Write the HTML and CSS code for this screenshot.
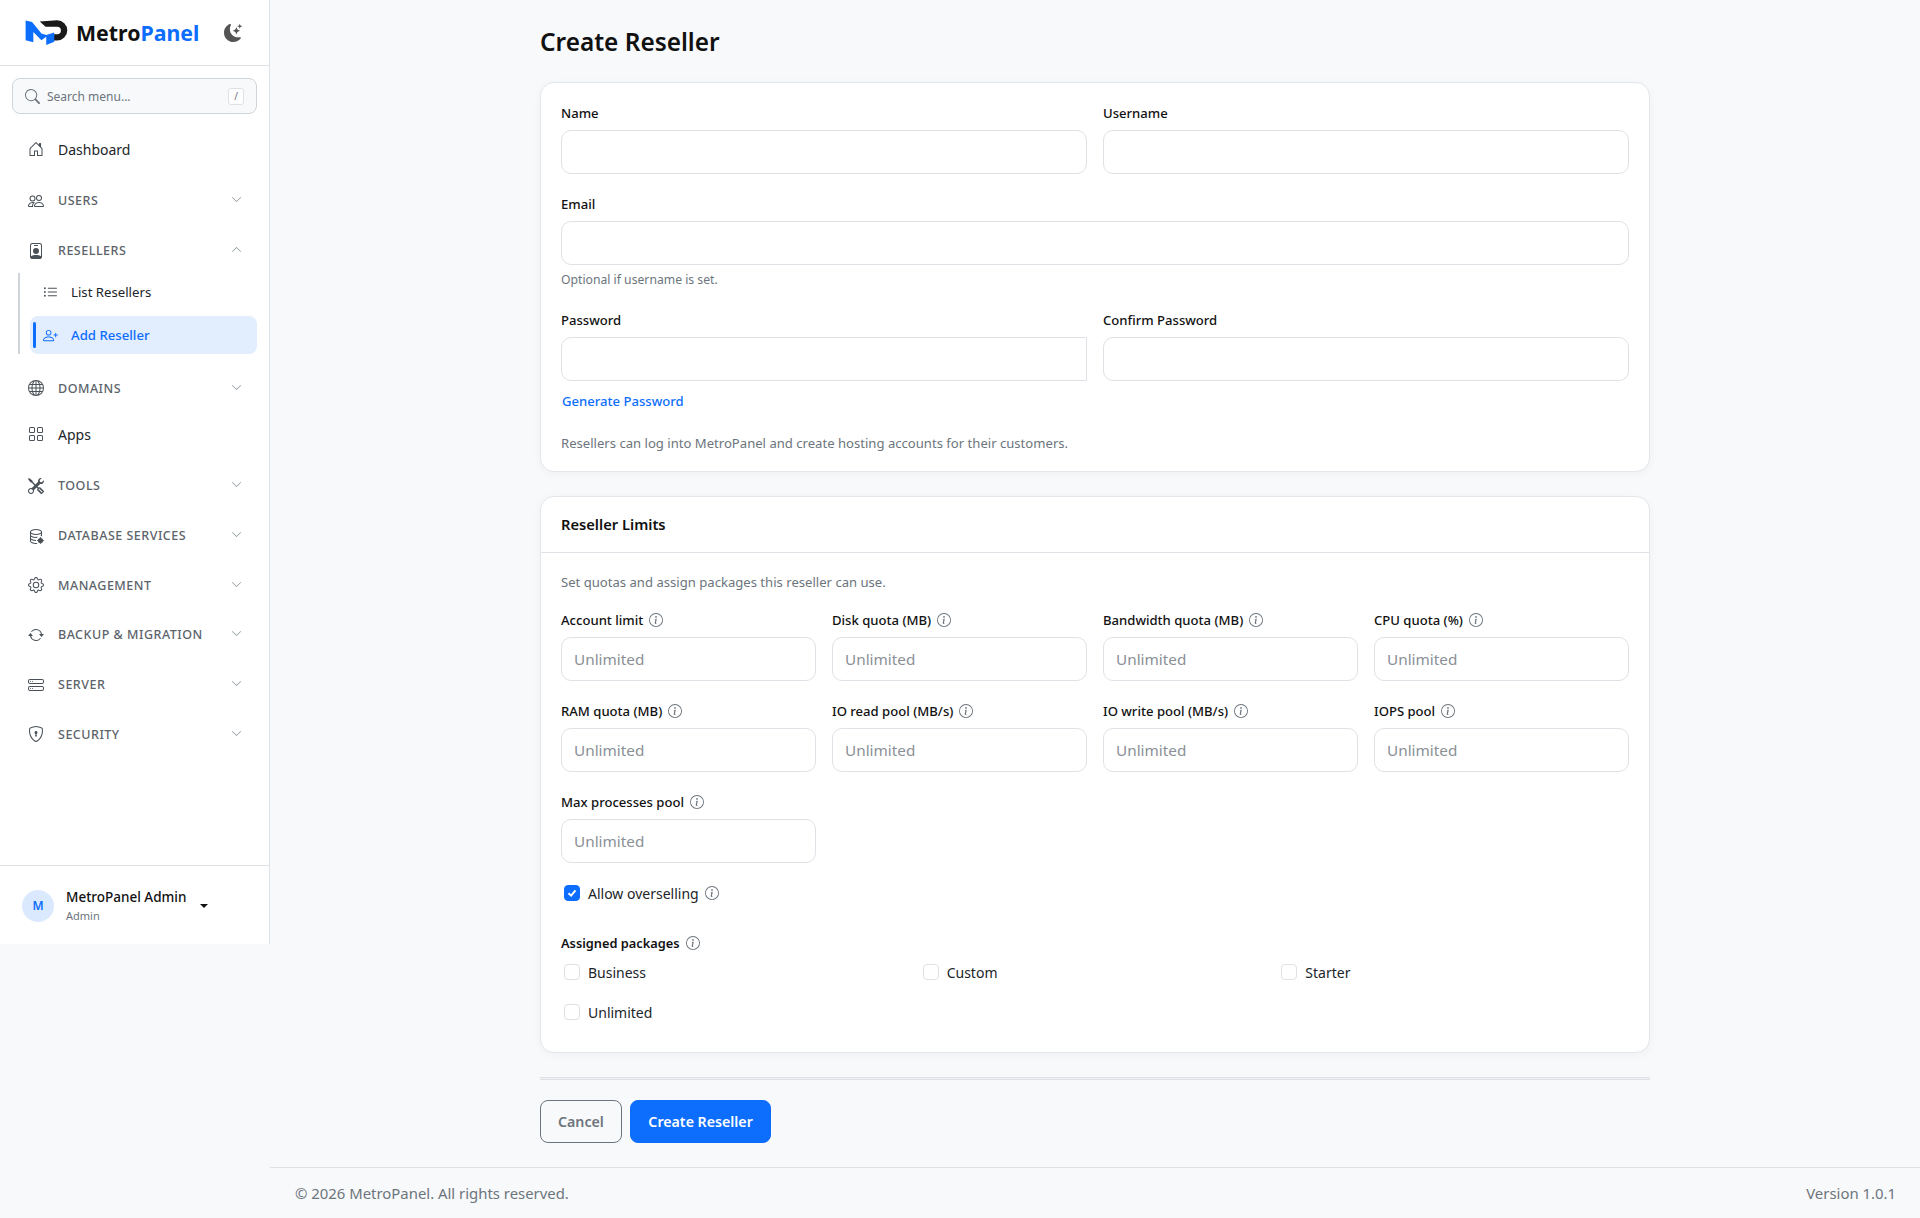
FILE: index.html
```html
<!DOCTYPE html>
<html lang="en">

<head>
  <meta charset="UTF-8" />
  <meta name="viewport" content="width=device-width, initial-scale=1.0" />
  <title>Create Reseller - MetroPanel</title>
  <link rel="stylesheet" href="styles.css">
</head>

<body>
  <svg class="sprite" xmlns="http://www.w3.org/2000/svg">
    <symbol id="i-house" viewBox="0 0 16 16"><path d="M8.354 1.146a.5.5 0 0 0-.708 0l-6 6A.5.5 0 0 0 1.5 7.5v7a.5.5 0 0 0 .5.5h4.5a.5.5 0 0 0 .5-.5v-4h2v4a.5.5 0 0 0 .5.5H14a.5.5 0 0 0 .5-.5v-7a.5.5 0 0 0-.146-.354L13 5.793V2.5a.5.5 0 0 0-.5-.5h-1a.5.5 0 0 0-.5.5v1.293L8.354 1.146zM2.5 14V7.707l5.5-5.5 5.5 5.5V14H10v-4a.5.5 0 0 0-.5-.5h-3a.5.5 0 0 0-.5.5v4H2.5z"/></symbol>
    <symbol id="i-people" viewBox="0 0 16 16"><path d="M15 14s1 0 1-1-1-4-5-4-5 3-5 4 1 1 1 1h8Zm-7.978-1A.261.261 0 0 1 7 12.996c.001-.264.167-1.03.76-1.72C8.312 10.629 9.282 10 11 10c1.717 0 2.687.63 3.24 1.276.593.69.758 1.457.76 1.72l-.008.002a.274.274 0 0 1-.014.002H7.022ZM11 7a2 2 0 1 0 0-4 2 2 0 0 0 0 4Zm3-2a3 3 0 1 1-6 0 3 3 0 0 1 6 0ZM6.936 9.28a5.88 5.88 0 0 0-1.23-.247A7.35 7.35 0 0 0 5 9c-4 0-5 3-5 4 0 .667.333 1 1 1h4.216A2.238 2.238 0 0 1 5 13c0-1.01.377-2.042 1.09-2.904.243-.294.526-.569.846-.816ZM4.92 10A5.493 5.493 0 0 0 4 13H1c0-.26.164-1.03.76-1.724.545-.636 1.492-1.256 3.16-1.275ZM1.5 5.5a3 3 0 1 1 6 0 3 3 0 0 1-6 0Zm3-2a2 2 0 1 0 0 4 2 2 0 0 0 0-4Z"/></symbol>
    <symbol id="i-badge" viewBox="0 0 16 16"><path d="M6.5 2a.5.5 0 0 0 0 1h3a.5.5 0 0 0 0-1h-3zM11 8a3 3 0 1 1-6 0 3 3 0 0 1 6 0z"/><path d="M4.5 0A2.5 2.5 0 0 0 2 2.5V14a2 2 0 0 0 2 2h8a2 2 0 0 0 2-2V2.5A2.5 2.5 0 0 0 11.5 0h-7zM3 2.5A1.5 1.5 0 0 1 4.5 1h7A1.5 1.5 0 0 1 13 2.5v10.795a4.2 4.2 0 0 0-.776-.492C11.392 12.387 10.063 12 8 12s-3.392.387-4.224.803a4.2 4.2 0 0 0-.776.492V2.5z"/></symbol>
    <symbol id="i-list" viewBox="0 0 16 16"><path d="M5 11.5a.5.5 0 0 1 .5-.5h9a.5.5 0 0 1 0 1h-9a.5.5 0 0 1-.5-.5zm0-4a.5.5 0 0 1 .5-.5h9a.5.5 0 0 1 0 1h-9a.5.5 0 0 1-.5-.5zm0-4a.5.5 0 0 1 .5-.5h9a.5.5 0 0 1 0 1h-9a.5.5 0 0 1-.5-.5zm-3 1a1 1 0 1 0 0-2 1 1 0 0 0 0 2zm0 4a1 1 0 1 0 0-2 1 1 0 0 0 0 2zm0 4a1 1 0 1 0 0-2 1 1 0 0 0 0 2z"/></symbol>
    <symbol id="i-person-plus" viewBox="0 0 16 16"><path d="M6 8a3 3 0 1 0 0-6 3 3 0 0 0 0 6zm2-3a2 2 0 1 1-4 0 2 2 0 0 1 4 0zm4 8c0 1-1 1-1 1H1s-1 0-1-1 1-4 6-4 6 3 6 4zm-1-.004c-.001-.246-.154-.986-.832-1.664C9.516 10.68 8.289 10 6 10c-2.29 0-3.516.68-4.168 1.332-.678.678-.83 1.418-.832 1.664h10z"/><path d="M13.5 5a.5.5 0 0 1 .5.5V7h1.5a.5.5 0 0 1 0 1H14v1.5a.5.5 0 0 1-1 0V8h-1.5a.5.5 0 0 1 0-1H13V5.5a.5.5 0 0 1 .5-.5z"/></symbol>
    <symbol id="i-globe" viewBox="0 0 16 16"><path d="M0 8a8 8 0 1 1 16 0A8 8 0 0 1 0 8zm7.5-6.923c-.67.204-1.335.82-1.887 1.855A7.97 7.97 0 0 0 5.145 4H7.5V1.077zM4.09 4a9.267 9.267 0 0 1 .64-1.539 6.7 6.7 0 0 1 .597-.933A7.025 7.025 0 0 0 2.255 4H4.09zm-.582 3.5c.03-.877.138-1.718.312-2.5H1.674a6.958 6.958 0 0 0-.656 2.5h2.49zM4.847 5a12.5 12.5 0 0 0-.338 2.5H7.5V5H4.847zM8.5 5v2.5h2.99a12.495 12.495 0 0 0-.337-2.5H8.5zM4.51 8.5a12.5 12.5 0 0 0 .337 2.5H7.5V8.5H4.51zm3.99 0V11h2.653c.187-.765.306-1.608.338-2.5H8.5zM5.145 12c.138.386.295.744.468 1.068.552 1.035 1.218 1.65 1.887 1.855V12H5.145zm.182 2.472a6.696 6.696 0 0 1-.597-.933A9.268 9.268 0 0 1 4.09 12H2.255a7.024 7.024 0 0 0 3.072 2.472zM3.82 11a13.652 13.652 0 0 1-.312-2.5h-2.49c.062.89.291 1.733.656 2.5H3.82zm6.853 3.472A7.024 7.024 0 0 0 13.745 12H11.91a9.27 9.27 0 0 1-.64 1.539 6.688 6.688 0 0 1-.597.933zM8.5 12v2.923c.67-.204 1.335-.82 1.887-1.855.173-.324.33-.682.468-1.068H8.5zm3.68-1h2.146c.365-.767.594-1.61.656-2.5h-2.49a13.65 13.65 0 0 1-.312 2.5zm2.802-3.5a6.959 6.959 0 0 0-.656-2.5H12.18c.174.782.282 1.623.312 2.5h2.49zM11.27 2.461c.247.464.462.98.64 1.539h1.835a7.024 7.024 0 0 0-3.072-2.472c.218.284.418.598.597.933zM10.855 4a7.966 7.966 0 0 0-.468-1.068C9.835 1.897 9.17 1.282 8.5 1.077V4h2.355z"/></symbol>
    <symbol id="i-grid" viewBox="0 0 16 16"><path d="M1 2.5A1.5 1.5 0 0 1 2.5 1h3A1.5 1.5 0 0 1 7 2.5v3A1.5 1.5 0 0 1 5.5 7h-3A1.5 1.5 0 0 1 1 5.5v-3zM2.5 2a.5.5 0 0 0-.5.5v3a.5.5 0 0 0 .5.5h3a.5.5 0 0 0 .5-.5v-3a.5.5 0 0 0-.5-.5h-3zm6.5.5A1.5 1.5 0 0 1 10.5 1h3A1.5 1.5 0 0 1 15 2.5v3A1.5 1.5 0 0 1 13.5 7h-3A1.5 1.5 0 0 1 9 5.5v-3zm1.5-.5a.5.5 0 0 0-.5.5v3a.5.5 0 0 0 .5.5h3a.5.5 0 0 0 .5-.5v-3a.5.5 0 0 0-.5-.5h-3zM1 10.5A1.5 1.5 0 0 1 2.5 9h3A1.5 1.5 0 0 1 7 10.5v3A1.5 1.5 0 0 1 5.5 15h-3A1.5 1.5 0 0 1 1 13.5v-3zm1.5-.5a.5.5 0 0 0-.5.5v3a.5.5 0 0 0 .5.5h3a.5.5 0 0 0 .5-.5v-3a.5.5 0 0 0-.5-.5h-3zm6.5.5A1.5 1.5 0 0 1 10.5 9h3a1.5 1.5 0 0 1 1.5 1.5v3a1.5 1.5 0 0 1-1.5 1.5h-3A1.5 1.5 0 0 1 9 13.5v-3zm1.5-.5a.5.5 0 0 0-.5.5v3a.5.5 0 0 0 .5.5h3a.5.5 0 0 0 .5-.5v-3a.5.5 0 0 0-.5-.5h-3z"/></symbol>
    <symbol id="i-tools" viewBox="0 0 16 16"><path d="M1 0 0 1l2.2 3.081a1 1 0 0 0 .815.419h.07a1 1 0 0 1 .708.293l2.675 2.675-2.617 2.654A3.003 3.003 0 0 0 0 13a3 3 0 1 0 5.878-.851l2.654-2.617.968.968-.305.914a1 1 0 0 0 .242 1.023l3.27 3.27a.997.997 0 0 0 1.414 0l1.586-1.586a.997.997 0 0 0 0-1.414l-3.27-3.27a1 1 0 0 0-1.023-.242L10.5 9.5l-.96-.96 2.68-2.643A3.005 3.005 0 0 0 16 3c0-.269-.035-.53-.102-.777l-2.14 2.141L12 4l-.364-1.757L13.777.102a3 3 0 0 0-3.675 3.68L7.462 6.46 4.793 3.793a1 1 0 0 1-.293-.707v-.071a1 1 0 0 0-.419-.814L1 0Zm9.646 10.646a.5.5 0 0 1 .708 0l2.914 2.915a.5.5 0 0 1-.707.707l-2.915-2.914a.5.5 0 0 1 0-.708ZM3 11l.471.242.529.026.287.445.445.287.026.529L5 13l-.242.471-.026.529-.445.287-.287.445-.529.026L3 15l-.471-.242L2 14.732l-.287-.445L1.268 14l-.026-.529L1 13l.242-.471.026-.529.445-.287.287-.445.529-.026L3 11Z"/></symbol>
    <symbol id="i-database" viewBox="0 0 16 16"><path d="M12.096 6.223A4.92 4.92 0 0 0 13 5.698V7c0 .289-.213.654-.753 1.007a4.493 4.493 0 0 1 1.753.25V4c0-1.007-.875-1.755-1.904-2.223C11.022 1.289 9.573 1 8 1s-3.022.289-4.096.777C2.875 2.245 2 2.993 2 4v9c0 1.007.875 1.755 1.904 2.223C4.978 15.71 6.427 16 8 16c.536 0 1.058-.034 1.555-.097a4.525 4.525 0 0 1-.813-.927C8.5 14.992 8.252 15 8 15c-1.464 0-2.766-.27-3.682-.687C3.356 13.875 3 13.373 3 13v-1.302c.271.202.58.378.904.525C4.978 12.71 6.427 13 8 13h.027a4.552 4.552 0 0 1 0-1H8c-1.464 0-2.766-.27-3.682-.687C3.356 10.875 3 10.373 3 10V8.698c.271.202.58.378.904.525C4.978 9.71 6.427 10 8 10c.262 0 .52-.008.774-.024a4.525 4.525 0 0 1 1.102-1.132C9.298 8.944 8.666 9 8 9c-1.464 0-2.766-.27-3.682-.687C3.356 7.875 3 7.373 3 7V5.698c.271.202.58.378.904.525C4.978 6.711 6.427 7 8 7s3.022-.289 4.096-.777ZM3 4c0-.374.356-.875 1.318-1.313C5.234 2.271 6.536 2 8 2s2.766.27 3.682.687C12.644 3.125 13 3.627 13 4c0 .374-.356.875-1.318 1.313C10.766 5.729 9.464 6 8 6s-2.766-.27-3.682-.687C3.356 4.875 3 4.373 3 4Z"/><circle cx="12.5" cy="12.5" r="2.6"/><path d="M11.9 9.2h1.2v6.6h-1.2zM9.2 11.9h6.6v1.2H9.2z"/></symbol>
    <symbol id="i-gear" viewBox="0 0 16 16"><path d="M8 4.754a3.246 3.246 0 1 0 0 6.492 3.246 3.246 0 0 0 0-6.492zM5.754 8a2.246 2.246 0 1 1 4.492 0 2.246 2.246 0 0 1-4.492 0z"/><path d="M9.796 1.343c-.527-1.79-3.065-1.79-3.592 0l-.094.319a.873.873 0 0 1-1.255.52l-.292-.16c-1.64-.892-3.433.902-2.54 2.541l.159.292a.873.873 0 0 1-.52 1.255l-.319.094c-1.79.527-1.79 3.065 0 3.592l.319.094a.873.873 0 0 1 .52 1.255l-.16.292c-.892 1.64.901 3.434 2.541 2.54l.292-.159a.873.873 0 0 1 1.255.52l.094.319c.527 1.79 3.065 1.79 3.592 0l.094-.319a.873.873 0 0 1 1.255-.52l.292.16c1.64.893 3.434-.902 2.54-2.541l-.159-.292a.873.873 0 0 1 .52-1.255l.319-.094c1.79-.527 1.79-3.065 0-3.592l-.319-.094a.873.873 0 0 1-.52-1.255l.16-.292c.893-1.64-.902-3.433-2.541-2.54l-.292.159a.873.873 0 0 1-1.255-.52l-.094-.319zm-2.633.283c.246-.835 1.428-.835 1.674 0l.094.319a1.873 1.873 0 0 0 2.693 1.115l.291-.16c.764-.415 1.6.42 1.184 1.185l-.159.292a1.873 1.873 0 0 0 1.116 2.692l.318.094c.835.246.835 1.428 0 1.674l-.319.094a1.873 1.873 0 0 0-1.115 2.693l.16.291c.415.764-.42 1.6-1.185 1.184l-.291-.159a1.873 1.873 0 0 0-2.693 1.116l-.094.318c-.246.835-1.428.835-1.674 0l-.094-.319a1.873 1.873 0 0 0-2.692-1.115l-.292.16c-.764.415-1.6-.42-1.184-1.185l.159-.291A1.873 1.873 0 0 0 1.945 8.93l-.319-.094c-.835-.246-.835-1.428 0-1.674l.319-.094A1.873 1.873 0 0 0 3.06 4.377l-.16-.292c-.415-.764.42-1.6 1.185-1.184l.292.159a1.873 1.873 0 0 0 2.692-1.115l.094-.319z"/></symbol>
    <symbol id="i-repeat" viewBox="0 0 16 16"><path d="M11.534 7h3.932a.25.25 0 0 1 .192.41l-1.966 2.36a.25.25 0 0 1-.384 0l-1.966-2.36a.25.25 0 0 1 .192-.41zm-11 2h3.932a.25.25 0 0 0 .192-.41L2.692 6.23a.25.25 0 0 0-.384 0L.342 8.59A.25.25 0 0 0 .534 9z"/><path d="M8 3c-1.552 0-2.94.707-3.857 1.818a.5.5 0 1 1-.771-.636A6.002 6.002 0 0 1 13.917 7H12.9A5.002 5.002 0 0 0 8 3zM3.1 9a5.002 5.002 0 0 0 8.757 2.182.5.5 0 1 1 .771.636A6.002 6.002 0 0 1 2.083 9H3.1z"/></symbol>
    <symbol id="i-hdd" viewBox="0 0 16 16"><path d="M14 10a1 1 0 0 1 1 1v1a1 1 0 0 1-1 1H2a1 1 0 0 1-1-1v-1a1 1 0 0 1 1-1h12zM2 9a2 2 0 0 0-2 2v1a2 2 0 0 0 2 2h12a2 2 0 0 0 2-2v-1a2 2 0 0 0-2-2H2z"/><path d="M5 11.5a.5.5 0 1 1-1 0 .5.5 0 0 1 1 0zm-2 0a.5.5 0 1 1-1 0 .5.5 0 0 1 1 0zM14 3a1 1 0 0 1 1 1v1a1 1 0 0 1-1 1H2a1 1 0 0 1-1-1V4a1 1 0 0 1 1-1h12zM2 2a2 2 0 0 0-2 2v1a2 2 0 0 0 2 2h12a2 2 0 0 0 2-2V4a2 2 0 0 0-2-2H2z"/><path d="M5 4.5a.5.5 0 1 1-1 0 .5.5 0 0 1 1 0zm-2 0a.5.5 0 1 1-1 0 .5.5 0 0 1 1 0z"/></symbol>
    <symbol id="i-shield" viewBox="0 0 16 16"><path d="M5.338 1.59a61.44 61.44 0 0 0-2.837.856.481.481 0 0 0-.328.39c-.554 4.157.726 7.19 2.253 9.188a10.725 10.725 0 0 0 2.287 2.233c.346.244.652.42.893.533.12.057.218.095.293.118a.55.55 0 0 0 .101.025.615.615 0 0 0 .1-.025c.076-.023.174-.061.294-.118.24-.113.547-.29.893-.533a10.726 10.726 0 0 0 2.287-2.233c1.527-1.997 2.807-5.031 2.253-9.188a.48.48 0 0 0-.328-.39c-.651-.213-1.75-.56-2.837-.855C9.552 1.29 8.531 1.067 8 1.067c-.53 0-1.552.223-2.662.524zM5.072.56C6.157.265 7.31 0 8 0s1.843.265 2.928.56c1.11.3 2.229.655 2.887.87a1.54 1.54 0 0 1 1.044 1.262c.596 4.477-.787 7.795-2.465 9.99a11.775 11.775 0 0 1-2.517 2.453 7.159 7.159 0 0 1-1.048.625c-.28.132-.581.24-.829.24s-.548-.108-.829-.24a7.158 7.158 0 0 1-1.048-.625 11.777 11.777 0 0 1-2.517-2.453C1.928 10.487.545 7.169 1.141 2.692A1.54 1.54 0 0 1 2.185 1.43 62.456 62.456 0 0 1 5.072.56z"/><path d="M9.5 6.5a1.5 1.5 0 0 1-1 1.415l.385 1.99a.5.5 0 0 1-.491.595h-.788a.5.5 0 0 1-.49-.595l.384-1.99a1.5 1.5 0 1 1 2-1.415z"/></symbol>
    <symbol id="i-info" viewBox="0 0 16 16"><path d="M8 15A7 7 0 1 1 8 1a7 7 0 0 1 0 14zm0 1A8 8 0 1 0 8 0a8 8 0 0 0 0 16z"/><path d="m8.93 6.588-2.29.287-.082.38.45.083c.294.07.352.176.288.469l-.738 3.468c-.194.897.105 1.319.808 1.319.545 0 1.178-.252 1.465-.598l.088-.416c-.2.176-.492.246-.686.246-.275 0-.375-.193-.304-.533L8.93 6.588zM9 4.5a1 1 0 1 1-2 0 1 1 0 0 1 2 0z"/></symbol>
    <symbol id="i-moon" viewBox="0 0 16 16"><path d="M6 .278a.768.768 0 0 1 .08.858 7.208 7.208 0 0 0-.878 3.46c0 4.021 3.278 7.277 7.318 7.277.527 0 1.04-.055 1.533-.16a.787.787 0 0 1 .81.316.733.733 0 0 1-.031.893A8.349 8.349 0 0 1 8.344 16C3.734 16 0 12.286 0 7.71 0 4.266 2.114 1.312 5.124.06A.752.752 0 0 1 6 .278z"/><path d="M10.794 3.148a.217.217 0 0 1 .412 0l.387 1.162c.173.518.579.924 1.097 1.097l1.162.387a.217.217 0 0 1 0 .412l-1.162.387a1.734 1.734 0 0 0-1.097 1.097l-.387 1.162a.217.217 0 0 1-.412 0l-.387-1.162A1.734 1.734 0 0 0 9.31 6.593l-1.162-.387a.217.217 0 0 1 0-.412l1.162-.387a1.734 1.734 0 0 0 1.097-1.097l.387-1.162zM13.863.099a.145.145 0 0 1 .274 0l.258.774c.115.346.386.617.732.732l.774.258a.145.145 0 0 1 0 .274l-.774.258a1.156 1.156 0 0 0-.732.732l-.258.774a.145.145 0 0 1-.274 0l-.258-.774a1.156 1.156 0 0 0-.732-.732l-.774-.258a.145.145 0 0 1 0-.274l.774-.258c.346-.115.617-.386.732-.732L13.863.1z"/></symbol>
    <symbol id="i-search" viewBox="0 0 16 16"><path d="M11.742 10.344a6.5 6.5 0 1 0-1.397 1.398h-.001c.03.04.062.078.098.115l3.85 3.85a1 1 0 0 0 1.415-1.414l-3.85-3.85a1.007 1.007 0 0 0-.115-.1zM12 6.5a5.5 5.5 0 1 1-11 0 5.5 5.5 0 0 1 11 0z"/></symbol>
    <symbol id="i-down" viewBox="0 0 16 16"><path d="M1.646 4.646a.5.5 0 0 1 .708 0L8 10.293l5.646-5.647a.5.5 0 0 1 .708.708l-6 6a.5.5 0 0 1-.708 0l-6-6a.5.5 0 0 1 0-.708z"/></symbol>
    <symbol id="i-up" viewBox="0 0 16 16"><path d="M7.646 4.646a.5.5 0 0 1 .708 0l6 6a.5.5 0 0 1-.708.708L8 5.707l-5.646 5.647a.5.5 0 0 1-.708-.708l6-6z"/></symbol>
  </svg>

  <div class="layout">
    <aside class="sidebar">
      <div class="brand">
        <svg class="brand-logo" viewBox="0 0 46 28">
          <path class="logo-dark" d="M15 2.700 L33 1.300 A10.500 10.500 0 0 1 33 22.300 H28 V15.800 H33 A3.900 3.900 0 0 0 33 8 H21 Z" />
          <path class="logo-blue" d="M0.300 1.500 L7 3 L16.700 15 L21.700 16.500 L30 14 V23.700 L21.700 27 V18.500 L16.700 22 L8.300 13.500 V24 L0.300 22 Z" />
        </svg>
        <span class="brand-name">Metro<span class="brand-accent">Panel</span></span>
        <svg class="icon moon"><use href="#i-moon" /></svg>
      </div>

      <div class="search-box">
        <svg class="icon search-icon"><use href="#i-search" /></svg>
        <span class="search-text">Search menu...</span>
        <kbd class="search-key">/</kbd>
      </div>

      <nav class="nav">
        <a class="nav-link"><svg class="icon"><use href="#i-house" /></svg>Dashboard</a>
        <a class="nav-group"><svg class="icon"><use href="#i-people" /></svg>USERS<svg class="icon chev"><use href="#i-down" /></svg></a>
        <a class="nav-group"><svg class="icon"><use href="#i-badge" /></svg>RESELLERS<svg class="icon chev"><use href="#i-up" /></svg></a>
        <div class="sub-nav">
          <a class="sub-link"><svg class="icon"><use href="#i-list" /></svg>List Resellers</a>
          <a class="sub-link active"><svg class="icon"><use href="#i-person-plus" /></svg>Add Reseller</a>
        </div>
        <a class="nav-group"><svg class="icon"><use href="#i-globe" /></svg>DOMAINS<svg class="icon chev"><use href="#i-down" /></svg></a>
        <a class="nav-link"><svg class="icon"><use href="#i-grid" /></svg>Apps</a>
        <a class="nav-group"><svg class="icon"><use href="#i-tools" /></svg>TOOLS<svg class="icon chev"><use href="#i-down" /></svg></a>
        <a class="nav-group"><svg class="icon"><use href="#i-database" /></svg>DATABASE SERVICES<svg class="icon chev"><use href="#i-down" /></svg></a>
        <a class="nav-group"><svg class="icon"><use href="#i-gear" /></svg>MANAGEMENT<svg class="icon chev"><use href="#i-down" /></svg></a>
        <a class="nav-group"><svg class="icon"><use href="#i-repeat" /></svg>BACKUP &amp; MIGRATION<svg class="icon chev"><use href="#i-down" /></svg></a>
        <a class="nav-group"><svg class="icon"><use href="#i-hdd" /></svg>SERVER<svg class="icon chev"><use href="#i-down" /></svg></a>
        <a class="nav-group"><svg class="icon"><use href="#i-shield" /></svg>SECURITY<svg class="icon chev"><use href="#i-down" /></svg></a>
      </nav>

      <div class="user-box">
        <div class="avatar">M</div>
        <div class="user-info">
          <div class="user-name">MetroPanel Admin</div>
          <div class="user-role">Admin</div>
        </div>
        <span class="caret"></span>
      </div>
    </aside>

    <div class="main">
      <main class="content">
        <h1 class="page-title">Create Reseller</h1>

        <section class="card card-basic">
          <div class="row-2">
            <div class="field">
              <label class="label">Name</label>
              <input class="input" type="text">
            </div>
            <div class="field">
              <label class="label">Username</label>
              <input class="input" type="text">
            </div>
          </div>
          <div class="field field-email">
            <label class="label">Email</label>
            <input class="input" type="text">
            <div class="hint">Optional if username is set.</div>
          </div>
          <div class="row-2">
            <div class="field">
              <label class="label">Password</label>
              <input class="input input-square" type="password">
              <a class="generate">Generate Password</a>
            </div>
            <div class="field">
              <label class="label">Confirm Password</label>
              <input class="input" type="password">
            </div>
          </div>
          <p class="help note">Resellers can log into MetroPanel and create hosting accounts for their customers.</p>
        </section>

        <section class="card">
          <h2 class="card-header">Reseller Limits</h2>
          <div class="card-body">
            <p class="help intro">Set quotas and assign packages this reseller can use.</p>
            <div class="row-4">
              <div class="field"><label class="label">Account limit<svg class="icon info"><use href="#i-info" /></svg></label><input class="input" placeholder="Unlimited"></div>
              <div class="field"><label class="label">Disk quota (MB)<svg class="icon info"><use href="#i-info" /></svg></label><input class="input" placeholder="Unlimited"></div>
              <div class="field"><label class="label">Bandwidth quota (MB)<svg class="icon info"><use href="#i-info" /></svg></label><input class="input" placeholder="Unlimited"></div>
              <div class="field"><label class="label">CPU quota (%)<svg class="icon info"><use href="#i-info" /></svg></label><input class="input" placeholder="Unlimited"></div>
              <div class="field"><label class="label">RAM quota (MB)<svg class="icon info"><use href="#i-info" /></svg></label><input class="input" placeholder="Unlimited"></div>
              <div class="field"><label class="label">IO read pool (MB/s)<svg class="icon info"><use href="#i-info" /></svg></label><input class="input" placeholder="Unlimited"></div>
              <div class="field"><label class="label">IO write pool (MB/s)<svg class="icon info"><use href="#i-info" /></svg></label><input class="input" placeholder="Unlimited"></div>
              <div class="field"><label class="label">IOPS pool<svg class="icon info"><use href="#i-info" /></svg></label><input class="input" placeholder="Unlimited"></div>
              <div class="field"><label class="label">Max processes pool<svg class="icon info"><use href="#i-info" /></svg></label><input class="input" placeholder="Unlimited"></div>
            </div>

            <label class="check oversell">
              <span class="box checked"><svg viewBox="0 0 16 16"><path d="M4 8.300 L7 11 L12 5" /></svg></span>
              Allow overselling<svg class="icon info"><use href="#i-info" /></svg>
            </label>

            <div class="packages-title">Assigned packages<svg class="icon info"><use href="#i-info" /></svg></div>
            <div class="packages">
              <label class="check"><span class="box"></span>Business</label>
              <label class="check"><span class="box"></span>Custom</label>
              <label class="check"><span class="box"></span>Starter</label>
              <label class="check"><span class="box"></span>Unlimited</label>
            </div>
          </div>
        </section>

        <hr class="divider">

        <div class="actions">
          <button class="btn btn-outline">Cancel</button>
          <button class="btn btn-primary">Create Reseller</button>
        </div>
      </main>

      <footer class="footer">
        <span>© 2026 MetroPanel. All rights reserved.</span>
        <span>Version 1.0.1</span>
      </footer>
    </div>
  </div>
</body>

</html>
```

FILE: styles.css
```css
* {
  margin: 0;
  padding: 0;
  box-sizing: border-box;
}

body {
  background: #f8f9fa;
  color: #212529;
  font-family: 'Noto Sans', 'Open Sans', sans-serif;
  font-size: 15px;
}

.sprite {
  display: none;
}

.icon {
  width: 16px;
  height: 16px;
  fill: currentColor;
  flex-shrink: 0;
}

.layout {
  display: flex;
  min-height: 1218px;
  align-items: flex-start;
}

/* Sidebar */
.sidebar {
  width: 270px;
  height: 944px;
  flex-shrink: 0;
  background: #fff;
  border-right: 1px solid #dee2e6;
  display: flex;
  flex-direction: column;
}

.brand {
  height: 66px;
  padding: 0 25px;
  display: flex;
  align-items: center;
  border-bottom: 1px solid #dee2e6;
}

.brand-logo {
  width: 45px;
  height: 27px;
  margin-top: -1px;
}

.logo-blue {
  fill: #0d6efd;
}

.logo-dark {
  fill: #1a1a1a;
}

.brand-name {
  margin-left: 6px;
  font-size: 21.3px;
  font-weight: 700;
  color: #111;
}

.brand-accent {
  color: #0d6efd;
}

.moon {
  width: 18px;
  height: 18px;
  margin-left: 25px;
  color: #555;
}

.search-box {
  margin: 12px 12px 0;
  height: 36px;
  padding: 0 12px;
  display: flex;
  align-items: center;
  background: #f8f9fa;
  border: 1px solid #ced4da;
  border-radius: 8px;
  color: #6c757d;
}

.search-icon {
  width: 15px;
  height: 15px;
}

.search-text {
  margin-left: 7px;
  flex: 1;
  font-size: 12px;
}

.search-key {
  width: 16px;
  height: 17px;
  font-family: inherit;
  font-size: 10px;
  line-height: 15px;
  text-align: center;
  border: 1px solid #dee2e6;
  border-radius: 3px;
  background: #fff;
}

.nav {
  flex: 1;
  padding: 14px 12px 0;
}

.nav-link,
.nav-group {
  display: flex;
  align-items: center;
  padding: 0 15px 0 16px;
}

.nav-link {
  height: 44px;
  margin: -1px 0 5px;
  font-size: 14px;
  color: #212529;
}

.nav-group {
  height: 49.7px;
  font-size: 12.5px;
  font-weight: 500;
  letter-spacing: .5px;
  color: #5c636a;
}

.nav-link .icon,
.nav-group .icon {
  margin-right: 14px;
  color: #495057;
}

.nav-group .chev {
  width: 11px;
  height: 11px;
  margin: -2px 0 0 auto;
  color: #8c9399;
}

.sub-nav {
  margin: -2px 0 9px 6px;
  border-left: 2px solid #ced4da;
  padding-left: 10px;
  display: flex;
  flex-direction: column;
  gap: 5px;
}

.sub-link {
  height: 38px;
  padding-left: 13px;
  display: flex;
  align-items: center;
  font-size: 13.2px;
  border-radius: 8px;
  color: #212529;
}

.sub-link .icon {
  width: 15px;
  height: 15px;
  margin-right: 13px;
  color: #495057;
}

.sub-link.active {
  position: relative;
  background: #e2edfd;
  color: #0d6efd;
  font-weight: 500;
}

.sub-link.active .icon {
  color: #0d6efd;
}

.sub-link.active::before {
  content: '';
  position: absolute;
  left: 3px;
  top: 6px;
  bottom: 6px;
  width: 3px;
  border-radius: 2px;
  background: #0d6efd;
}

.user-box {
  height: 79px;
  padding: 2px 22px 0;
  display: flex;
  align-items: center;
  border-top: 1px solid #dee2e6;
}

.avatar {
  width: 32px;
  height: 32px;
  border-radius: 50%;
  background: #dbe9fe;
  color: #0d6efd;
  font-size: 12px;
  font-weight: 600;
  text-align: center;
  line-height: 32px;
}

.user-info {
  margin-left: 12px;
}

.user-name {
  font-size: 13.5px;
  font-weight: 500;
  color: #111;
  line-height: 20px;
  margin-top: -1px;
}

.user-role {
  font-size: 11px;
  color: #6c757d;
  line-height: 16px;
  margin-top: 1px;
}

.caret {
  margin-left: 14px;
  border-top: 4.5px solid #111;
  border-left: 4.5px solid transparent;
  border-right: 4.5px solid transparent;
}

/* Main */
.main {
  flex: 1;
  min-height: 1218px;
  display: flex;
  flex-direction: column;
}

.content {
  width: 1110px;
  margin: 0 auto;
  flex: 1;
}

.page-title {
  height: 82px;
  padding-top: 22px;
  font-size: 24.4px;
  line-height: 40px;
  font-weight: 600;
  color: #111;
}

.card {
  background: #fff;
  border: 1px solid #e3e6ea;
  border-radius: 14px;
  box-shadow: 0 2px 10px rgba(0, 0, 0, .04);
}

.card-basic {
  padding: 20px 20px 19px;
  margin-bottom: 24px;
}

.row-2 {
  display: grid;
  grid-template-columns: 1fr 1fr;
  gap: 16px;
}

.field {
  margin-bottom: 20px;
  min-width: 0;
}

.label {
  display: flex;
  align-items: center;
  height: 20px;
  margin-bottom: 7px;
  font-size: 13.1px;
  font-weight: 500;
  color: #111;
}

.label .info {
  margin-left: 6px;
}

.info {
  width: 14px;
  height: 14px;
  color: #6c757d;
}

.input {
  display: block;
  width: 100%;
  height: 44px;
  padding: 0 12px;
  border: 1px solid #dee2e6;
  border-radius: 10px;
  background: #fff;
  font-family: inherit;
  font-size: 15.3px;
}

.input::placeholder {
  color: #8a9096;
}

.input-square {
  border-radius: 10px 0 0 10px;
}

.help {
  font-size: 13.1px;
  line-height: 18px;
  color: #6c757d;
}

.hint {
  margin-top: 6px;
  font-size: 12.2px;
  line-height: 18px;
  color: #6c757d;
}

.field-email {
  margin-bottom: 21px;
}

.generate {
  display: block;
  height: 20px;
  margin: 10px 0 0 1px;
  font-size: 13.1px;
  line-height: 20px;
  font-weight: 500;
  color: #0d6efd;
}

.note {
  margin-top: 3px;
}

.card-header {
  height: 56px;
  padding: 0 20px;
  border-bottom: 1px solid #dee2e6;
  font-size: 14.7px;
  font-weight: 600;
  line-height: 54px;
  color: #111;
}

.card-body {
  padding: 20px 20px 8px;
}

.intro {
  margin-bottom: 19px;
}

.row-4 {
  display: grid;
  grid-template-columns: repeat(4, 1fr);
  column-gap: 16px;
}

.check {
  display: flex;
  align-items: center;
  height: 20px;
  font-size: 14px;
  color: #212529;
}

.box {
  width: 16px;
  height: 16px;
  margin: 0 8px 0 3px;
  flex-shrink: 0;
  border: 1px solid #dee2e6;
  border-radius: 4px;
  background: #fff;
}

.box.checked {
  background: #0d6efd;
  border-color: #0d6efd;
}

.box svg {
  display: block;
  fill: none;
  stroke: #fff;
  stroke-width: 2.2;
}

.check .info {
  margin-left: 6px;
}

.oversell {
  margin-bottom: 30px;
}

.packages-title {
  display: flex;
  align-items: center;
  height: 20px;
  font-size: 12.8px;
  font-weight: 600;
  color: #111;
  margin-bottom: 9px;
}

.packages-title .info {
  margin-left: 6px;
}

.packages {
  display: grid;
  grid-template-columns: repeat(3, 1fr);
  gap: 20px 8px;
  padding-bottom: 22px;
}

.divider {
  margin: 24px 0 20px;
  height: 3px;
  border: 0;
  border-top: 1px solid #dee2e6;
  border-bottom: 1px solid #dee2e6;
  background: #f0f1f3;
}

.actions {
  display: flex;
  gap: 8px;
  margin-bottom: 24px;
}

.btn {
  height: 43px;
  padding: 0 17.5px;
  border-radius: 8px;
  font-family: inherit;
  font-size: 14.2px;
  font-weight: 600;
}

.btn-outline {
  padding: 0 17px;
  background: transparent;
  border: 1px solid #6c757d;
  color: #6c757d;
}

.btn-primary {
  background: #0d6efd;
  border: 1px solid #0d6efd;
  color: #fff;
}

.footer {
  height: 51px;
  padding: 0 24px 0 25px;
  display: flex;
  justify-content: space-between;
  align-items: center;
  border-top: 1px solid #dee2e6;
  font-size: 14.9px;
  color: #6c757d;
}
```
